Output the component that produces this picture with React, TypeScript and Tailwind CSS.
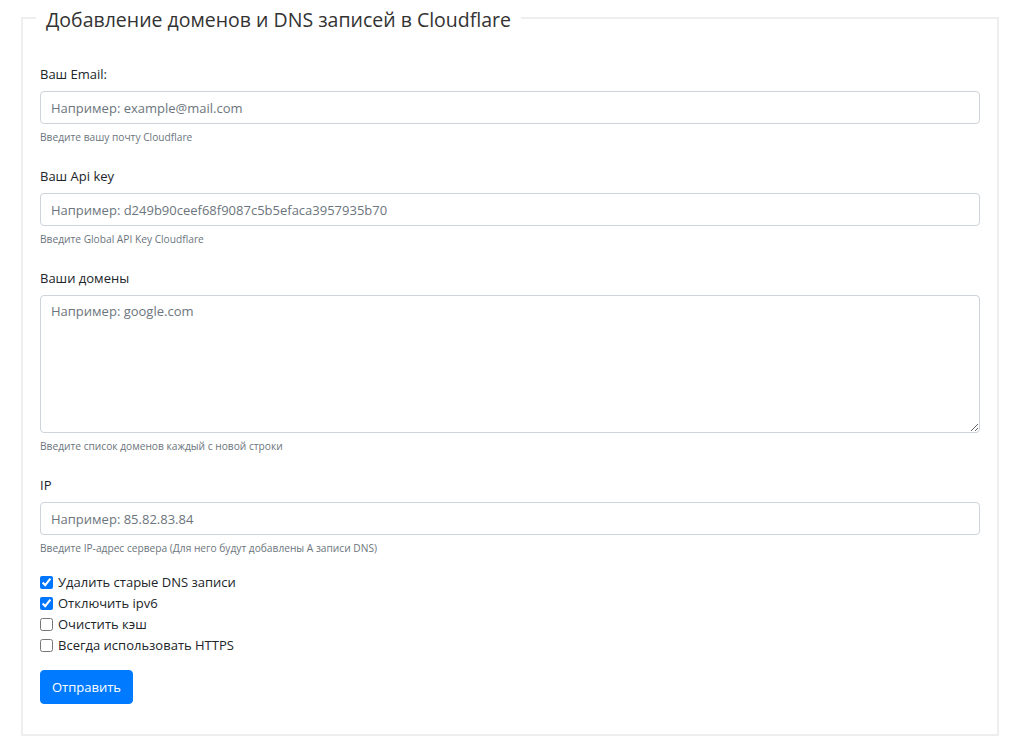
const fields = [
  {
    label: "Ваш Email:",
    placeholder: "Например: example@mail.com",
    help: "Введите вашу почту Cloudflare",
  },
  {
    label: "Ваш Api key",
    placeholder: "Например: d249b90ceef68f9087c5b5efaca3957935b70",
    help: "Введите Global API Key Cloudflare",
  },
];

const options = [
  { label: "Удалить старые DNS записи", checked: true },
  { label: "Отключить ipv6", checked: true },
  { label: "Очистить кэш", checked: false },
  { label: "Всегда использовать HTTPS", checked: false },
];

const inputCls =
  "block w-full rounded-[4px] border border-[#ced4da] bg-white px-[10px] text-[13px] text-[#495057] placeholder:text-[#6c757d] outline-none";

function Group({
  label,
  help,
  children,
  last,
}: {
  label: string;
  help: string;
  children: React.ReactNode;
  last?: boolean;
}) {
  return (
    <div className={last ? "mb-[15px]" : "mb-[20px]"}>
      <label className="mb-[6px] block text-[13px] leading-[21px] text-[#212529]">
        {label}
      </label>
      {children}
      <small className="mt-[5px] block text-[10.2px] leading-[17px] text-[#6c757d]">
        {help}
      </small>
    </div>
  );
}

export default function App() {
  return (
    <div
      className="min-h-screen bg-white pl-[21px]"
      style={{ fontFamily: '"Open Sans", "Noto Sans", sans-serif' }}
    >
      <fieldset className="w-[978px] border-2 border-[#eeeeee] px-[17px] pb-[30px] pt-[28px]">
        <legend className="-ml-[4px] px-[10px] pt-[3px] text-[19.5px] leading-[33px] text-[#333333]">
          Добавление доменов и DNS записей в Cloudflare
        </legend>

        {fields.map((f) => (
          <Group key={f.label} label={f.label} help={f.help}>
            <input type="text" placeholder={f.placeholder} className={`${inputCls} h-[33px]`} />
          </Group>
        ))}

        <Group label="Ваши домены" help="Введите список доменов каждый с новой строки">
          <textarea
            placeholder="Например: google.com"
            className={`${inputCls} h-[138px] py-[5px] leading-[21px]`}
          />
        </Group>

        <Group label="IP" help="Введите IP-адрес сервера (Для него будут добавлены A записи DNS)" last>
          <input type="text" placeholder="Например: 85.82.83.84" className={`${inputCls} h-[33px]`} />
        </Group>

        <div className="flex flex-col">
          {options.map((o) => (
            <label
              key={o.label}
              className="flex h-[21px] items-center gap-[5px] text-[13px] leading-[21px] text-[#212529]"
            >
              <input type="checkbox" defaultChecked={o.checked} className="m-0 h-[13px] w-[13px]" />
              {o.label}
            </label>
          ))}
        </div>

        <button
          type="submit"
          className="mt-[14px] h-[34px] rounded-[4px] border border-[#007bff] bg-[#007bff] px-[11px] text-[13px] leading-[21px] text-white"
        >
          Отправить
        </button>
      </fieldset>
    </div>
  );
}
